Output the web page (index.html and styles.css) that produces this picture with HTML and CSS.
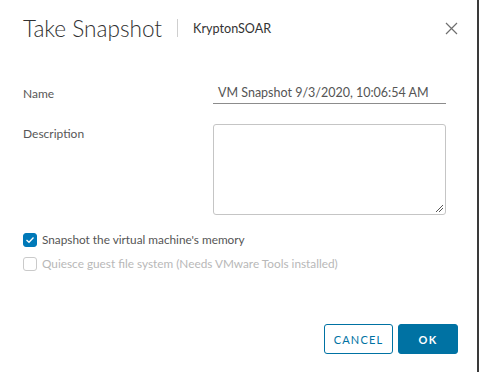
FILE: index.html
```html
<!DOCTYPE html>
<html>
<head>
<meta charset="utf-8">
<link rel="stylesheet" href="styles.css">
</head>
<body>
<div class="modal">
  <div class="header">
    <h1 class="title">Take Snapshot</h1>
    <span class="sep"></span>
    <span class="subtitle">KryptonSOAR</span>
    <button class="close" aria-label="Close">
      <svg width="13" height="13" viewBox="0 0 13 13"><path d="M1 1L12 12M12 1L1 12" stroke="#6f6f6f" stroke-width="1.2" fill="none"/></svg>
    </button>
  </div>
  <div class="body">
    <div class="row name-row">
      <label class="label">Name</label>
      <div class="input">VM Snapshot 9/3/2020, 10:06:54 AM</div>
    </div>
    <div class="row desc-row">
      <label class="label">Description</label>
      <div class="textarea">
        <svg class="grip" width="9" height="9" viewBox="0 0 9 9"><path d="M8 1L1 8M8 4L4 8" stroke="#555" stroke-width="1" fill="none"/></svg>
      </div>
    </div>
    <div class="checks">
      <div class="check">
        <span class="box checked"><svg width="10" height="8" viewBox="0 0 10 8"><path d="M1.5 4L4 6.3L8.5 1.5" stroke="#fff" stroke-width="1.3" fill="none"/></svg></span>
        <span class="ctext">Snapshot the virtual machine's memory</span>
      </div>
      <div class="check disabled">
        <span class="box"></span>
        <span class="ctext">Quiesce guest file system (Needs VMware Tools installed)</span>
      </div>
    </div>
  </div>
  <div class="footer">
    <button class="btn outline">CANCEL</button>
    <button class="btn primary">OK</button>
  </div>
</div>
</body>
</html>
```
FILE: styles.css
```css
* { box-sizing: border-box; }
html, body { margin: 0; padding: 0; background: #fff; }
body { font-family: Lato, "Open Sans", sans-serif; color: #565656; }
.modal {
  width: 479px;
  height: 372px;
  border-right: 2px solid #3a3a3a;
  padding: 0 19px 0 23px;
  display: flex;
  flex-direction: column;
}
.header {
  display: flex;
  align-items: center;
  height: 56px;
}
.title {
  margin: 0;
  font-size: 22.6px;
  font-weight: 300;
  color: #313131;
}
.sep {
  width: 1px;
  height: 18px;
  background: #cfcfcf;
  margin: 0 15px 0 15px;
}
.subtitle {
  font-size: 12.6px;
  color: #333;
  font-weight: 400;
  flex: 1;
}
.close {
  border: 0;
  background: none;
  padding: 0;
  width: 13px;
  height: 13px;
  display: flex;
}
.body { flex: 1; padding-top: 24px; }
.row { display: flex; }
.label {
  width: 190px;
  font-size: 12px;
  color: #575757;
}
.name-row { align-items: flex-start; }
.name-row .label { padding-top: 6px; }
.input {
  width: 233px;
  height: 24px;
  border-bottom: 1px solid #8c8c8c;
  font-size: 12.5px;
  color: #555;
  padding: 5px 0 0 5px;
}
.desc-row { margin-top: 20px; }
.desc-row .label { padding-top: 2px; }
.textarea {
  width: 233px;
  height: 91px;
  border: 1px solid #c5c5c5;
  border-radius: 3px;
  position: relative;
}
.grip { position: absolute; right: 1px; bottom: 1px; }
.checks { margin-top: 17px; display: flex; flex-direction: column; gap: 9px; }
.check { display: flex; align-items: center; gap: 5px; font-size: 11.8px; color: #555; }
.box {
  width: 14px; height: 14px;
  border: 1px solid #b3b3b3;
  border-radius: 3px;
  display: flex; align-items: center; justify-content: center;
}
.box.checked { background: #0079b8; border-color: #0079b8; }
.check.disabled { color: #b8b8b8; }
.check.disabled .box { border-color: #cacaca; }
.footer {
  display: flex;
  justify-content: flex-end;
  gap: 5px;
  padding-bottom: 18px;
}
.btn {
  height: 30px;
  border-radius: 3px;
  font-family: Lato, sans-serif;
  font-size: 11px;
  letter-spacing: 1.2px;
}
.outline { width: 69px; border: 1px solid #0072a3; background: #fff; color: #0072a3; font-weight: 400; }
.primary { width: 60px; border: 1px solid #0072a3; background: #0072a3; color: #fff; font-weight: 700; }
```
